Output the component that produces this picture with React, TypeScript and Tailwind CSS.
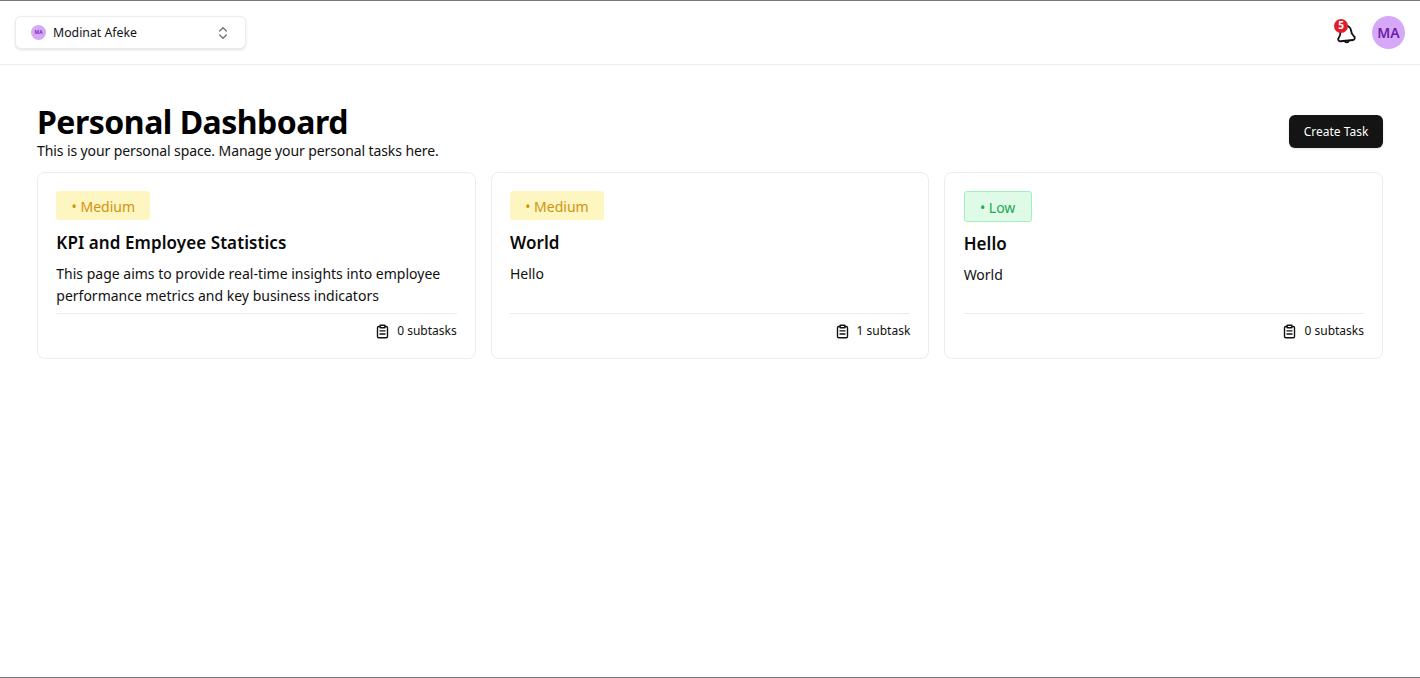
import React from "react";

function Clip() {
  return (
    <svg width="15" height="15" viewBox="0 0 24 24" fill="none" stroke="currentColor" strokeWidth="2.2" strokeLinecap="round" strokeLinejoin="round" className="shrink-0">
      <rect x="8" y="2" width="8" height="4" rx="1" />
      <path d="M16 4h2a2 2 0 0 1 2 2v14a2 2 0 0 1-2 2H6a2 2 0 0 1-2-2V6a2 2 0 0 1 2-2h2" />
      <path d="M8 11h8M8 16h8" />
    </svg>
  );
}

function Chevrons() {
  return (
    <svg width="16" height="16" viewBox="0 0 24 24" fill="none" stroke="#6b7280" strokeWidth="2" strokeLinecap="round" strokeLinejoin="round">
      <path d="m7 15 5 5 5-5" />
      <path d="m7 9 5-5 5 5" />
    </svg>
  );
}

function Bell() {
  return (
    <svg width="20" height="20" viewBox="0 0 24 24" fill="none" stroke="#111" strokeWidth="2.2" strokeLinecap="round" strokeLinejoin="round" className="-rotate-6 translate-x-[1px] translate-y-[1px]">
      <path d="M9.500 20.500a2.800 2.800 0 0 0 5 0" />
      <path d="M3 15.500A2.500 2.500 0 0 0 4.500 20h15a2.500 2.500 0 0 0 1.500-4.500C19.500 14 18.500 12 18.500 8.500A6.500 6.500 0 0 0 5.500 8.500C5.500 12 4.500 14 3 15.500" />
    </svg>
  );
}

type CardProps = {
  level: "Medium" | "Low";
  title: string;
  desc: React.ReactNode;
  count: string;
};

function Card({ level, title, desc, count }: CardProps) {
  return (
    <div className="flex flex-col rounded-lg border border-[#ececec] bg-white pl-[18.3px] pr-[18px] pt-[18px] pb-[18px]">
      {level === "Medium" ? (
        <span className="self-start flex h-[29px] w-[94px] items-center justify-center rounded-[3px] bg-[#fef6c0] pt-[1px] text-[14px] text-[#d1930f]">• Medium</span>
      ) : (
        <span className="self-start flex h-[31px] w-[68px] items-center justify-center rounded-[3px] border border-[#9bf3b9] bg-[#dffbe8] pt-[1px] text-[14px] text-[#22a853]">• Low</span>
      )}
      <h3 className={level === "Low" ? "mt-[9px] text-[17px] leading-[26px] font-semibold tracking-[0.08px] text-[#0a0a0a]" : "mt-[10px] text-[17px] leading-[26px] font-semibold tracking-[0.08px] text-[#0a0a0a]"}>{title}</h3>
      <p className="mt-[7px] h-[44px] text-[14px] leading-[22px] text-[#111]">{desc}</p>
      <div className="mt-auto border-t border-[#ececec] pt-[8px] flex items-center justify-end gap-[7px] text-[12px] leading-[18px] text-[#111]">
        <Clip />
        <span>{count}</span>
      </div>
    </div>
  );
}

export default function App() {
  return (
    <div className="h-[678px] flex flex-col bg-white border-t border-b border-[#77777c] text-black font-['Noto_Sans','Open_Sans',sans-serif]">
      <header className="h-[64px] shrink-0 flex items-center justify-between border-b border-[#ececec] pl-[15px] pr-[15px]">
        <div className="flex h-[33px] w-[231px] items-center justify-between rounded-md border border-[#ececec] bg-white pl-[15px] pr-[14px] shadow-sm">
          <div className="flex items-center gap-[7px]">
            <span className="flex h-[15px] w-[15px] items-center justify-center rounded-full bg-[#d8a8f8] text-[5px] font-semibold text-[#6b21a8]">MA</span>
            <span className="pt-[2px] text-[12.3px] text-[#111]">Modinat Afeke</span>
          </div>
          <Chevrons />
        </div>
        <div className="flex items-center gap-[15px]">
          <div className="relative flex h-[24px] w-[24px] items-center justify-center">
            <Bell />
            <span className="absolute -top-[2px] left-[1px] flex h-[14px] w-[14px] items-center justify-center rounded-full bg-[#dc1f2b] text-[10px] font-bold text-white">5</span>
          </div>
          <div className="flex h-[33px] w-[33px] items-center justify-center rounded-full bg-[#d8a8f8] text-[14px] font-semibold text-[#6b21a8]">MA</div>
        </div>
      </header>
      <main className="px-[37px]">
        <div className="flex items-end justify-between pt-[36px]">
          <div>
            <h1 className="text-[32px] leading-[42px] font-bold tracking-[-0.5px] text-black">Personal Dashboard</h1>
            <p className="text-[14px] leading-[16px] tracking-[-0.1px] text-[#111]">This is your personal space. Manage your personal tasks here.</p>
          </div>
          <button className="mb-[11px] h-[33px] w-[94px] rounded-md bg-[#141414] text-[12px] text-white shadow-sm">Create Task</button>
        </div>
        <div className="mt-[13px] grid h-[187px] grid-cols-3 gap-[15px]">
          <Card level="Medium" title="KPI and Employee Statistics" desc="This page aims to provide real-time insights into employee performance metrics and key business indicators" count="0 subtasks" />
          <Card level="Medium" title="World" desc="Hello" count="1 subtask" />
          <Card level="Low" title="Hello" desc="World" count="0 subtasks" />
        </div>
      </main>
    </div>
  );
}
